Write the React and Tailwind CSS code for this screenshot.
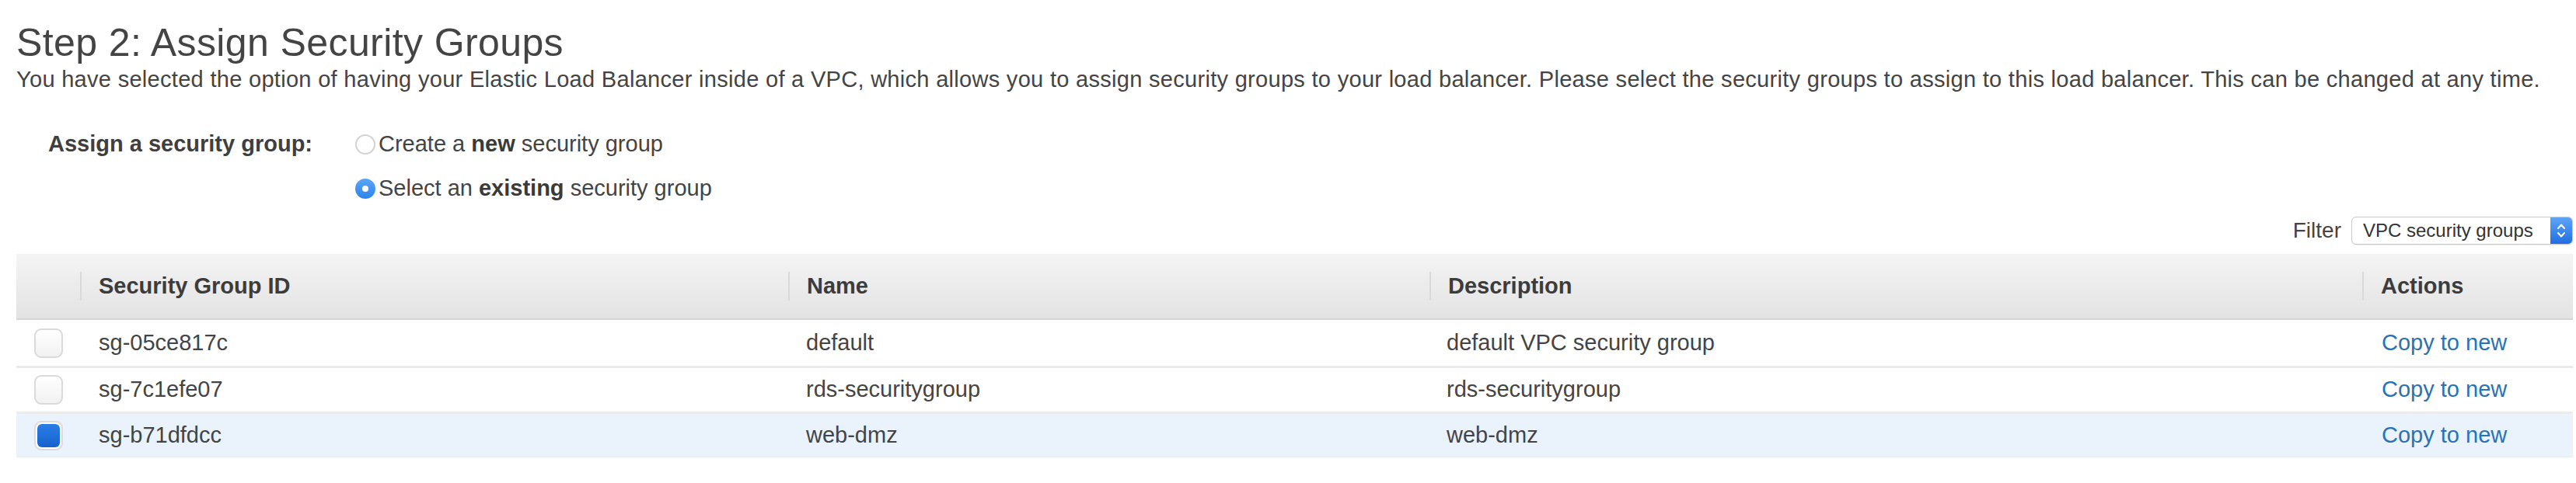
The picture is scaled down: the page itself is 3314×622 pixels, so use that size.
import React from 'react'

const groups = [
  { id: 'sg-05ce817c', name: 'default', desc: 'default VPC security group', checked: false },
  { id: 'sg-7c1efe07', name: 'rds-securitygroup', desc: 'rds-securitygroup', checked: false },
  { id: 'sg-b71dfdcc', name: 'web-dmz', desc: 'web-dmz', checked: true },
]

function Radio({ checked }) {
  if (checked) {
    return (
      <span className="w-[26px] h-[26px] rounded-full bg-linear-to-b from-[#5aa6f8] to-[#2b84ec] flex items-center justify-center shrink-0">
        <span className="w-[8px] h-[8px] rounded-full bg-white" />
      </span>
    )
  }
  return (
    <span className="w-[26px] h-[26px] rounded-full border-2 border-[#d2d2d2] bg-white shrink-0" />
  )
}

function Checkbox({ checked }) {
  if (checked) {
    return (
      <span className="w-[37px] h-[38px] rounded-[9px] border-2 border-[#dcdcdc] bg-white flex items-center justify-center">
        <span className="w-[29px] h-[30px] rounded-[6px] bg-linear-to-b from-[#2a7ee6] to-[#1763cc]" />
      </span>
    )
  }
  return (
    <span className="w-[37px] h-[38px] rounded-[9px] border-2 border-[#dadada] bg-linear-to-b from-white to-[#f1f1f1]" />
  )
}

function HeadCell({ children, sep = true }) {
  return (
    <div className="flex items-center h-full">
      {sep && <span className="w-[2px] h-[37px] bg-[#d9d9d9] shrink-0" />}
      <span className="pl-[22px] font-bold text-[#3c3c3c]">{children}</span>
    </div>
  )
}

export default function App() {
  return (
    <div className="w-[3314px] h-[622px] bg-white overflow-hidden font-['Liberation_Sans',Arial,sans-serif] text-[#444] pl-[21px] pr-[4px] pt-[27px]">
      <h2 className="text-[50px] leading-[56px] tracking-[0.4px] text-[#444]">Step 2: Assign Security Groups</h2>
      <p className="text-[29px] leading-[34px] tracking-[0.3px] mt-[2px] whitespace-nowrap">
        You have selected the option of having your Elastic Load Balancer inside of a VPC, which allows you to assign security groups to your load balancer. Please select the security groups to assign to this load balancer. This can be changed at any time.
      </p>

      <div className="flex mt-[47px] text-[29px]">
        <div className="ml-[41px] w-[395px] h-[40px] flex items-center font-bold text-[#3f3f3f]">
          Assign a security group:
        </div>
        <div className="flex flex-col gap-[17px]">
          <label className="h-[40px] flex items-center gap-[4px]">
            <Radio checked={false} />
            <span>
              Create a <b className="text-[#3a3a3a]">new</b> security group
            </span>
          </label>
          <label className="h-[40px] flex items-center gap-[4px]">
            <Radio checked />
            <span>
              Select an <b className="text-[#3a3a3a]">existing</b> security group
            </span>
          </label>
        </div>
      </div>

      <div className="flex justify-end items-center gap-[13px] mt-[14px] h-[40px]">
        <span className="text-[28px]">Filter</span>
        <div className="w-[285px] h-[36px] rounded-[6px] border border-[#c9c9c9] bg-white flex items-stretch overflow-hidden shadow-[0_1px_1px_rgba(0,0,0,0.08)]">
          <span className="flex-1 flex items-center pl-[14px] text-[24px] text-[#333] whitespace-nowrap">
            VPC security groups
          </span>
          <span className="w-[28px] bg-linear-to-b from-[#5da3f6] to-[#1f6fe2] flex items-center justify-center">
            <svg width="14" height="24" viewBox="0 0 14 24" fill="none" stroke="white" strokeWidth="2" strokeLinecap="round" strokeLinejoin="round">
              <path d="M3 9 L7 4.5 L11 9" />
              <path d="M3 15 L7 19.5 L11 15" />
            </svg>
          </span>
        </div>
      </div>

      <div className="mt-[10px] text-[29px]">
        <div className="grid grid-cols-[82px_911px_825px_1200px_1fr] h-[85px] bg-linear-to-b from-[#f4f4f4] to-[#e3e3e3] border-b-2 border-[#d4d4d4]">
          <div />
          <HeadCell>Security Group ID</HeadCell>
          <HeadCell>Name</HeadCell>
          <HeadCell>Description</HeadCell>
          <HeadCell>Actions</HeadCell>
        </div>
        {groups.map((g, i) => (
          <div
            key={g.id}
            className={`grid grid-cols-[82px_911px_825px_1200px_1fr] h-[59px] items-center ${
              i > 0 ? 'border-t-[3px] border-[#ebebeb]' : ''
            } ${g.checked ? 'bg-[#eaf3fc] border-b border-b-[#e3ecf5]' : 'bg-white'}`}
          >
            <div className="flex justify-center">
              <Checkbox checked={g.checked} />
            </div>
            <div className="pl-[24px]">{g.id}</div>
            <div className="pl-[23px]">{g.name}</div>
            <div className="pl-[22px]">{g.desc}</div>
            <div className="pl-[25px] text-[#2a72b6]">Copy to new</div>
          </div>
        ))}
      </div>
    </div>
  )
}
